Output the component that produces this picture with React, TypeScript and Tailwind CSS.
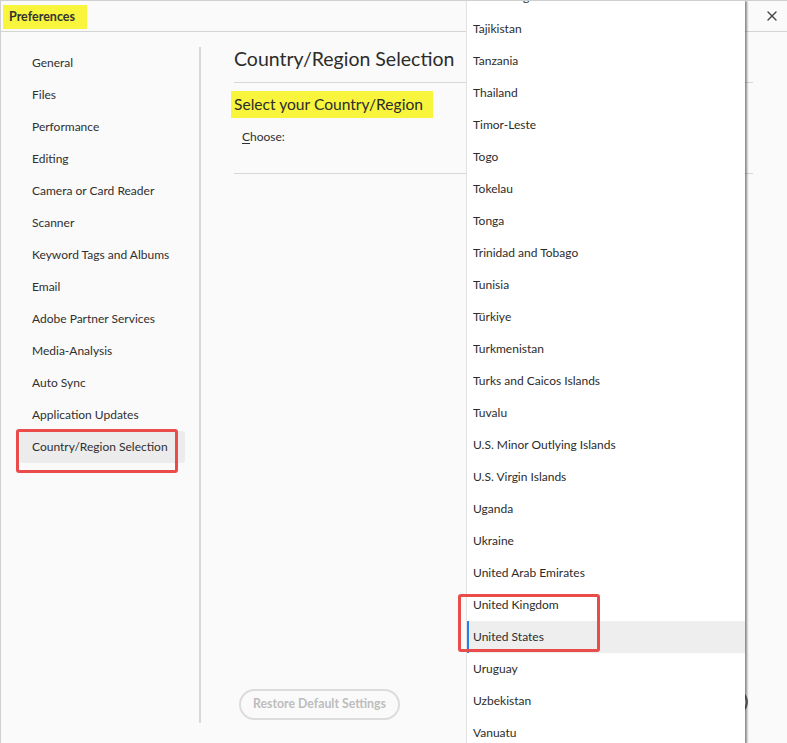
import React from 'react'
import { X } from 'lucide-react'

const sections = [
  'General',
  'Files',
  'Performance',
  'Editing',
  'Camera or Card Reader',
  'Scanner',
  'Keyword Tags and Albums',
  'Email',
  'Adobe Partner Services',
  'Media-Analysis',
  'Auto Sync',
  'Application Updates',
  'Country/Region Selection',
]

const countries = [
  'Taiwan region',
  'Tajikistan',
  'Tanzania',
  'Thailand',
  'Timor-Leste',
  'Togo',
  'Tokelau',
  'Tonga',
  'Trinidad and Tobago',
  'Tunisia',
  'Türkiye',
  'Turkmenistan',
  'Turks and Caicos Islands',
  'Tuvalu',
  'U.S. Minor Outlying Islands',
  'U.S. Virgin Islands',
  'Uganda',
  'Ukraine',
  'United Arab Emirates',
  'United Kingdom',
  'United States',
  'Uruguay',
  'Uzbekistan',
  'Vanuatu',
]

const font = { fontFamily: 'Lato, "Noto Sans", sans-serif' }

export default function App() {
  return (
    <div
      className="relative w-[787px] h-[743px] overflow-hidden bg-[#fafafa] border-l border-t border-[#cfcfcf] text-[#2f2f2f] flex flex-col"
      style={font}
    >
      {/* title bar */}
      <div className="h-[31px] shrink-0 border-b border-[#d4d4d4] flex items-center justify-between">
        <div className="ml-[2px] mt-[2px] h-[24px] w-[84px] pl-[6px] bg-[#f8f53c] flex items-center text-[12.5px] font-bold text-[#333]">
          Preferences
        </div>
        <button className="mr-[7px] text-[#444]">
          <X size={16} strokeWidth={2} />
        </button>
      </div>

      <div className="flex flex-1 min-h-0">
        {/* sidebar */}
        <div className="w-[200px] shrink-0 mt-[15px] mb-[20px] border-r-2 border-[#d8d8d8]">
          {sections.map((s, i) => (
            <div
              key={s}
              className={
                'ml-[19px] w-[165px] h-8 pl-3 flex items-center text-[12px] ' +
                (i === sections.length - 1 ? 'bg-[#ececec] rounded-[3px]' : '')
              }
            >
              {s}
            </div>
          ))}
        </div>

        {/* main */}
        <div className="flex-1 pl-[33px] pr-[34px] mt-[15px] mb-[23px] flex flex-col">
          <div className="h-[36px] border-b border-[#d6d6d6] text-[19.5px] text-[#2c2c2c] leading-[24px] whitespace-nowrap">
            Country/Region Selection
          </div>
          <div className="mt-[8px] -ml-[3px] w-[202px] h-[27px] pl-[3px] bg-[#f8f53c] flex items-center text-[15.6px] text-[#2c2c2c]">
            Select your Country/Region
          </div>
          <div className="h-[56px] border-b border-[#d6d6d6] pl-2 pt-[10px] text-[12px]">
            <span className="underline underline-offset-2">C</span>hoose:
          </div>
          <div className="mt-auto flex justify-between items-end">
            <button className="ml-[5px] h-[31px] px-[12px] rounded-full border-2 border-[#dcdcdc] text-[12.3px] font-bold text-[#bdbdbd]">
              Restore Default Settings
            </button>
            <button className="mr-[5px] mb-[6px] h-[24px] w-[80px] rounded-full border-2 border-[#6e6e6e] text-[12.5px] font-bold text-[#444]">
              OK
            </button>
          </div>
        </div>
      </div>

      {/* open dropdown list */}
      <div className="absolute left-[465px] top-0 w-[279px] h-[743px] bg-white border-l border-[#e2e2e2] shadow-[2px_0_2px_rgba(0,0,0,0.45)]">
        <div className="-mt-5">
          {countries.map((c) => (
            <div
              key={c}
              className={
                'h-8 flex items-center text-[12px] text-[#2c2c2c] ' +
                (c === 'United States'
                  ? 'bg-[#eeeeee] border-l-2 border-[#2680eb] pl-[4px]'
                  : 'pl-[6px]')
              }
            >
              {c}
            </div>
          ))}
        </div>
      </div>

      {/* annotation boxes */}
      <div className="absolute left-[15px] top-[428px] w-[162px] h-[44px] border-[3px] border-[#ea4b4b] rounded-[3px] pointer-events-none" />
      <div className="absolute left-[457px] top-[593px] w-[142px] h-[58px] border-[3px] border-[#ea4b4b] rounded-[3px] pointer-events-none" />
    </div>
  )
}
